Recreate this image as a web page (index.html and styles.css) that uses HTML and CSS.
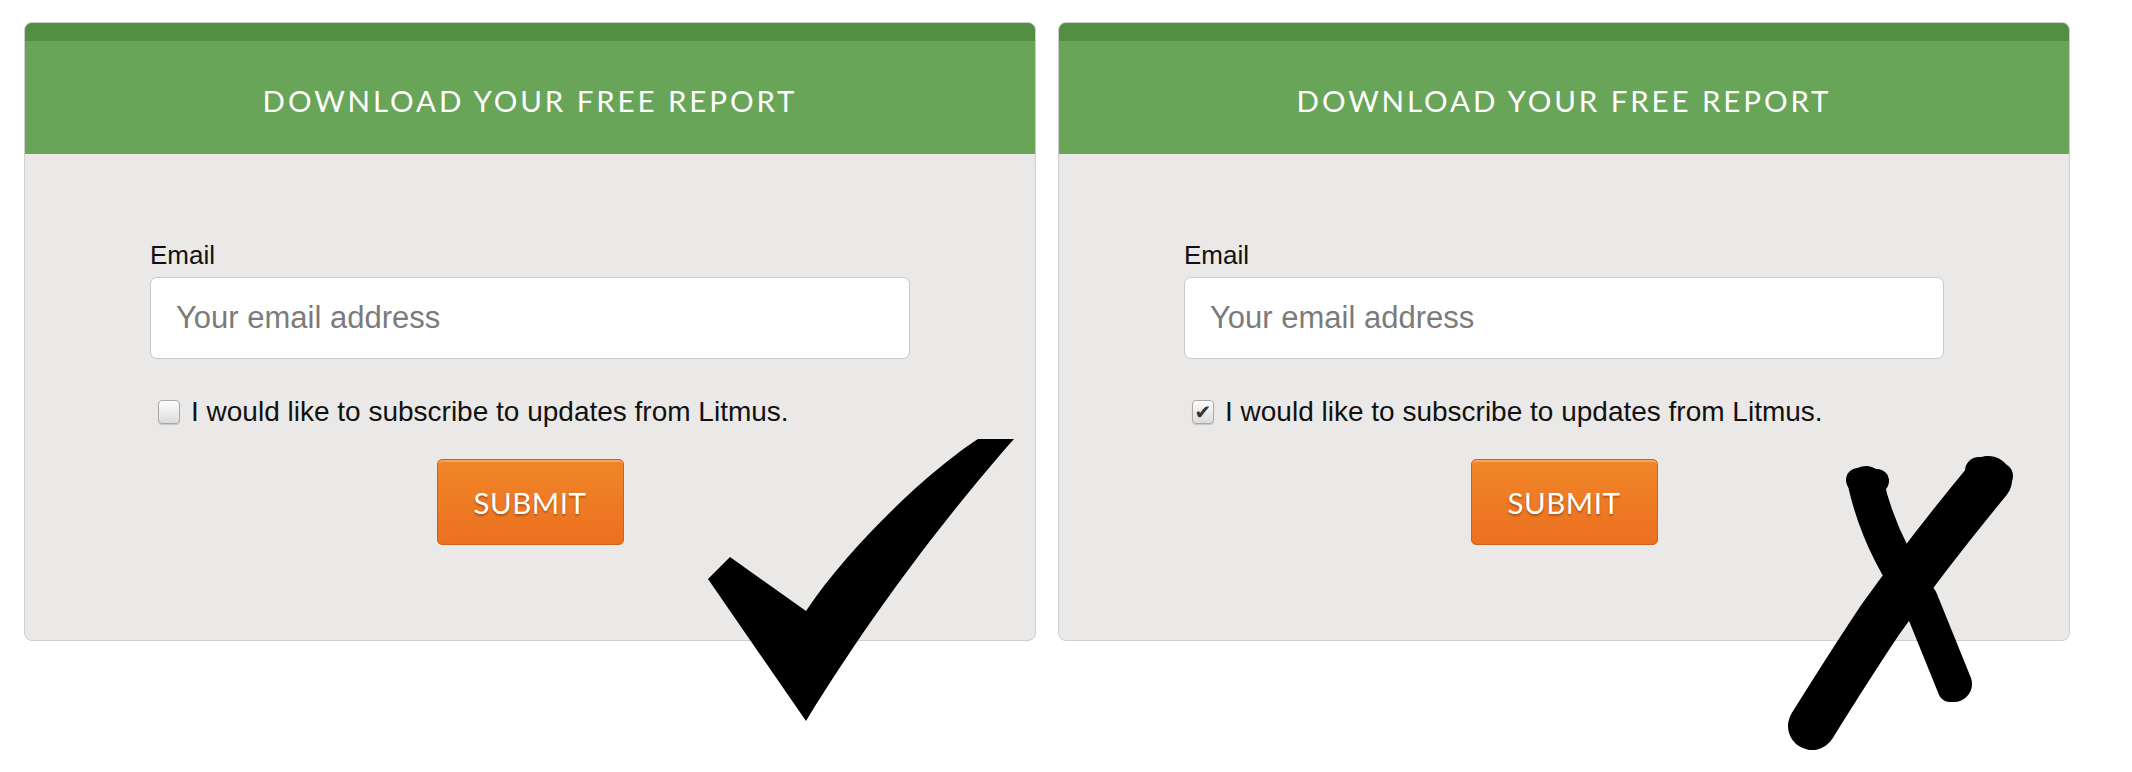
FILE: index.html
```html
<!DOCTYPE html>
<html>
<head>
  <meta charset="UTF-8">
  <title>Download your free report</title>
  <link rel="stylesheet" href="styles.css">
</head>
<body>
  <div class="page">
    <div class="example">
      <div class="card">
        <div class="card-head">
          <h2>DOWNLOAD YOUR FREE REPORT</h2>
        </div>
        <form class="card-body">
          <label class="field-label">Email</label>
          <input type="email" class="email" placeholder="Your email address">
          <label class="opt"><span class="box"></span>I would like to subscribe to updates from Litmus.</label>
          <button type="button" class="submit">SUBMIT</button>
        </form>
      </div>
      <!-- big tick: good example -->
      <svg class="mark tick" viewBox="0 0 320 300" width="320" height="300">
        <path d="M30 127 L106 181 C150 115 230 40 278 9 L314 9 C260 70 180 170 106 291 L8 149 Z" fill="#000"/>
      </svg>
    </div>

    <div class="example">
      <div class="card">
        <div class="card-head">
          <h2>DOWNLOAD YOUR FREE REPORT</h2>
        </div>
        <form class="card-body">
          <label class="field-label">Email</label>
          <input type="email" class="email" placeholder="Your email address">
          <label class="opt"><span class="box checked">&#10004;</span>I would like to subscribe to updates from Litmus.</label>
          <button type="button" class="submit">SUBMIT</button>
        </form>
      </div>
      <!-- hand drawn cross: bad example -->
      <svg class="mark cross" viewBox="0 0 250 300" width="250" height="300">
        <g stroke="#000" stroke-linecap="round" stroke-linejoin="round" fill="none">
          <path d="M86 34 Q100 95 140 150 L174 234" stroke-width="36"/>
          <path d="M208 30 Q150 100 100 170 Q70 215 32 276" stroke-width="48"/>
        </g>
        <g fill="#000">
          <circle cx="78" cy="30" r="12"/>
          <circle cx="97" cy="31" r="12"/>
          <circle cx="199" cy="21" r="14"/>
          <circle cx="220" cy="26" r="13"/>
          <circle cx="170" cy="240" r="12"/>
          <circle cx="26" cy="282" r="13"/>
        </g>
      </svg>
    </div>
  </div>
</body>
</html>
```

FILE: styles.css
```css
body {
  margin: 0;
  min-height: 100vh;
  background: #fff;
  font-family: "Liberation Sans", Arial, sans-serif;
}

.page {
  display: flex;
  gap: 22px;
  padding: 22px 24px;
  min-height: 772px;
  box-sizing: border-box;
}

.example {
  position: relative;
}

.card {
  width: 1012px;
  height: 619px;
  box-sizing: border-box;
  background: #eae9e7;
  border: 1px solid #cfcfcf;
  border-radius: 8px;
  overflow: hidden;
}

.card-head {
  background: #68a559;
  border-top: 18px solid #528f45;
  height: 113px;
  display: flex;
  align-items: center;
  justify-content: center;
}

.card-head h2 {
  margin: 6px 0 0 0;
  color: #fff;
  font-family: Lato, "Open Sans", sans-serif;
  font-weight: 400;
  font-size: 29.5px;
  letter-spacing: 2.9px;
}

.card-body {
  display: flex;
  flex-direction: column;
  padding: 86px 125px 0 125px;
}

.field-label {
  font-size: 26px;
  line-height: 30px;
  color: #111;
  margin-bottom: 7px;
}

.email {
  height: 82px;
  box-sizing: border-box;
  border: 1px solid #c9c9c9;
  border-radius: 7px;
  background: #fff;
  padding: 0 25px;
  font-family: "Liberation Sans", Arial, sans-serif;
  font-size: 31px;
  color: #333;
}

.email::placeholder {
  color: #7b7b7b;
}

.opt {
  display: flex;
  align-items: center;
  margin-top: 38px;
  padding-left: 8px;
  font-size: 28px;
  line-height: 30px;
  color: #111;
}

.box {
  width: 20px;
  height: 22px;
  margin-right: 11px;
  border: 1px solid #a9a9a9;
  border-radius: 4px;
  background: linear-gradient(#fdfdfd, #dcdcdc);
  box-shadow: inset 0 1px 0 #fff, 0 1px 1px rgba(0,0,0,0.15);
  display: flex;
  align-items: center;
  justify-content: center;
  font-family: "DejaVu Sans", sans-serif;
  font-size: 20px;
  color: #333;
}

.submit {
  align-self: center;
  margin-top: 32px;
  width: 187px;
  height: 86px;
  border: 1px solid #c9621c;
  border-radius: 5px;
  background: linear-gradient(#f08628, #ec7020);
  box-shadow: inset 0 2px 0 rgba(255,255,255,0.25);
  color: #fff;
  font-family: Lato, "Open Sans", sans-serif;
  font-size: 29.5px;
  letter-spacing: 0.5px;
  text-shadow: 0 2px 2px rgba(120,50,0,0.5);
  cursor: pointer;
}

.mark {
  position: absolute;
}

.tick {
  left: 676px;
  top: 408px;
}

.cross {
  left: 722px;
  top: 428px;
}
```
